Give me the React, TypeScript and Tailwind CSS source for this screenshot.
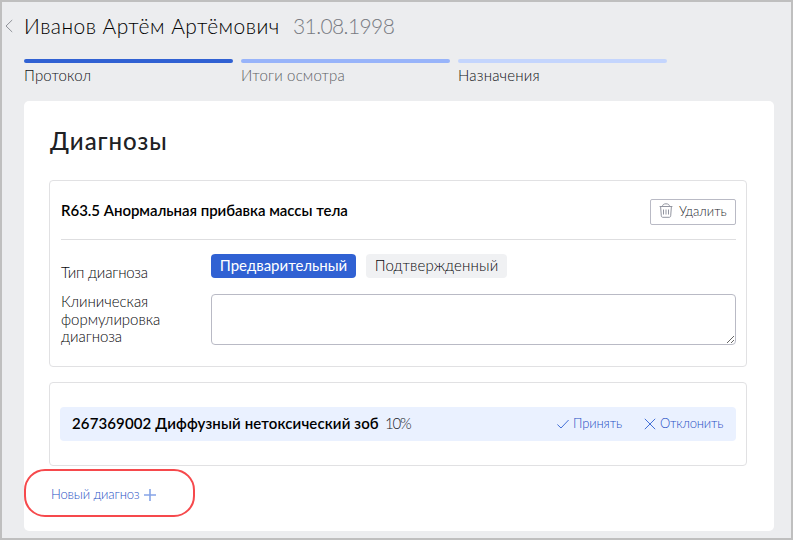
import React from "react";

const steps = [
  { label: "Протокол", bar: "bg-[#3061d3]", text: "text-[#101216] tracking-[0.15px]" },
  { label: "Итоги осмотра", bar: "bg-[#98b4fa]", text: "text-[#5c5f64] tracking-[0.15px]" },
  { label: "Назначения", bar: "bg-[#c4d5fd]", text: "text-[#101216] tracking-[0.2px]" },
];

function ChevronLeft() {
  return (
    <svg className="-mt-[9px] h-3.5 w-2" viewBox="0 0 8 14" fill="none" stroke="#8f9298">
      <path d="M7.200 1 1 7l6.200 6" />
    </svg>
  );
}

function TrashIcon() {
  return (
    <svg className="-mt-0.5 h-[15px] w-[14px]" viewBox="0 0 14 15" fill="none" stroke="#9295a0">
      <path d="M.6 3.500h12.800M3.500 3.500C3.500 1.800 4.600 .8 7 .8s3.500 1 3.500 2.700M1.600 3.500l.7 9.300c.1 1 .6 1.500 1.600 1.500h6.200c1 0 1.500-.5 1.600-1.500l.7-9.300M4.500 6.500v5M7 6.500v5M9.500 6.500v5" />
    </svg>
  );
}

function CheckIcon() {
  return (
    <svg className="h-3 w-3" viewBox="0 0 12 12" fill="none" stroke="#3061d3" strokeWidth=".9">
      <path d="M.4 6.500 4 10 11.600 2" />
    </svg>
  );
}

function CrossIcon() {
  return (
    <svg className="h-3 w-3" viewBox="0 0 12 12" fill="none" stroke="#3061d3" strokeWidth=".9">
      <path d="m.8.8 10.400 10.400M11.200.8.8 11.200" />
    </svg>
  );
}

function PlusIcon() {
  return (
    <svg className="h-3 w-3" viewBox="0 0 12 12" fill="none" stroke="#86a4e7" strokeWidth="1.600">
      <path d="M6 0v12M0 6h12" />
    </svg>
  );
}

export default function App() {
  return (
    <div className="h-[540px] w-[793px] overflow-hidden border-2 border-[#bfbfbf] bg-[#ecedef] font-['Lato','Open_Sans',sans-serif] font-light text-[#202124]">
      <header className="flex h-[57px] items-center whitespace-nowrap pl-[3px]">
        <ChevronLeft />
        <h1 className="ml-[11px] w-[269px] pb-[10px] text-[21px] leading-7 tracking-[0.45px] text-black">Иванов Артём Артёмович</h1>
        <span className="pb-[10px] text-[21px] leading-7 tracking-[-0.6px] text-[#787b82]">31.08.1998</span>
      </header>

      <nav className="ml-[22px] flex gap-2">
        {steps.map((s) => (
          <div key={s.label} className="w-[209px]">
            <div className={"h-1 rounded-sm " + s.bar} />
            <div className={"mb-px mt-[3px] text-[15px] leading-[18px] " + s.text}>{s.label}</div>
          </div>
        ))}
      </nav>

      <main className="ml-[22px] mt-4 h-[430px] w-[750px] rounded-[5px] bg-white pl-[25px] pt-[24px]">
        <h2 className="h-[55px] pl-px text-[24px] font-medium leading-8 tracking-[1px]">Диагнозы</h2>

        <section className="h-[187px] w-[698px] rounded-[4px] border border-[#e1e1e3] pl-[11px] pr-[10px]">
          <div className="flex h-[59px] items-center justify-between border-b border-[#dedee0] pt-[3px]">
            <h3 className="pb-0.5 text-[15px] font-semibold tracking-[-0.03px] text-black">R63.5 Анормальная прибавка массы тела</h3>
            <button className="flex h-[26px] w-[86px] items-center gap-1.5 rounded-[2px] border border-[#b9bac5] pl-2 text-[13px] tracking-[0.02px] text-[#24262e]">
              <TrashIcon />
              Удалить
            </button>
          </div>
          <div className="mt-[14px] flex h-10">
            <div className="w-[150px] pt-[9px] text-[15px] leading-[18px] tracking-[-0.18px] text-[#08090c]">Тип диагноза</div>
            <button className="mr-2.5 h-6 w-[145px] rounded-[4px] bg-[#3061d3] pb-0.5 text-[15px] font-normal leading-[22px] text-white">Предварительный</button>
            <button className="h-6 w-[141px] rounded-[4px] bg-[#f0f1f3] pb-0.5 text-[15px] leading-[22px] tracking-[0.15px] text-[#08090c]">Подтвержденный</button>
          </div>
          <div className="flex">
            <label className="-mt-px w-[150px] text-[15px] leading-[17.500px] tracking-[-0.03px] text-[#08090c]">
              Клиническая<br />формулировка<br />диагноза
            </label>
            <textarea className="block h-[51px] w-[525px] resize rounded-[4px] border border-[#b9bac5] bg-white" />
          </div>
        </section>

        <section className="mt-[15px] h-[84px] w-[698px] rounded-[4px] border border-[#e1e1e3] pl-[10px] pr-[10px] pt-6">
          <div className="flex h-[34px] items-center whitespace-nowrap rounded-[4px] bg-[#eaf1ff] pl-3">
            <strong className="w-[313px] pb-0.5 text-[15px] font-semibold tracking-[0.12px] text-black">267369002 Диффузный нетоксический зоб</strong>
            <span className="w-[172px] pb-0.5 text-[15px] tracking-[-1.2px] text-[#202228]">10%</span>
            <button className="flex w-[87px] items-center gap-1 text-[13px] tracking-[-0.12px] text-[#274fc4]"><CheckIcon />Принять</button>
            <button className="flex items-center gap-1 text-[13px] tracking-[-0.2px] text-[#274fc4]"><CrossIcon />Отклонить</button>
          </div>
        </section>

        <div className="-ml-[25px] mt-[3px] flex h-12 w-[171px] items-center rounded-[21px] border-2 border-[#f6494c] pl-[25px] pt-1">
          <button className="flex items-center gap-1 text-[13px] text-[#274fc4]"><span className="w-[89px] whitespace-nowrap text-left tracking-[-0.12px]">Новый диагноз</span><PlusIcon /></button>
        </div>
      </main>
    </div>
  );
}
